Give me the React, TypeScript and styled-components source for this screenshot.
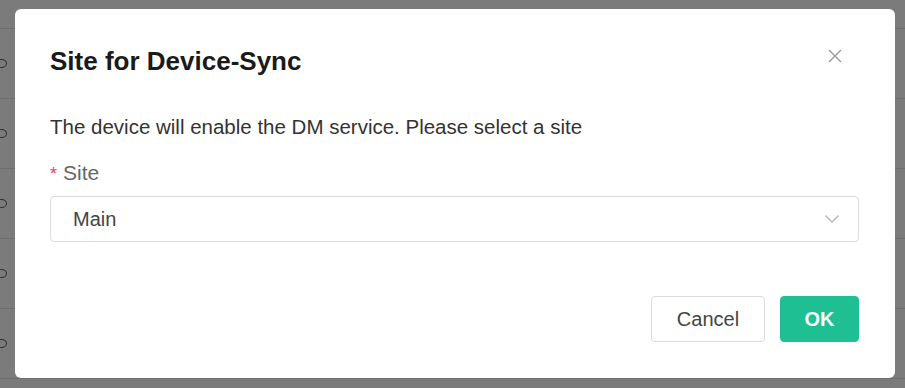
import React from "react";
import styled, { createGlobalStyle } from "styled-components";

const Global = createGlobalStyle`
  html, body { margin: 0; padding: 0; }
  body {
    width: 905px;
    height: 388px;
    overflow: hidden;
    background: #7b7b7b;
    font-family: "Liberation Sans", Arial, sans-serif;
  }
`;

const Page = styled.div`
  position: relative;
  width: 905px;
  height: 388px;
  overflow: hidden;
  background: #7b7b7b;
`;

const Table = styled.div`
  display: flex;
  flex-direction: column;
  padding-top: 28px;
`;

const Row = styled.div`
  height: 70px;
  border-top: 1px solid #6f6f6f;
  display: flex;
  align-items: center;
  box-sizing: border-box;
`;

const RowIcon = styled.span`
  width: 9px;
  height: 7px;
  margin-left: -4px;
  border: 1.5px solid #2e2e2e;
  border-radius: 50%;
`;

const Modal = styled.div`
  position: absolute;
  left: 15px;
  top: 9px;
  width: 880px;
  height: 369px;
  box-sizing: border-box;
  background: #fff;
  border-radius: 6px;
  padding: 38px 36px 0 35px;
  display: flex;
  flex-direction: column;
`;

const Header = styled.div`
  display: flex;
  align-items: center;
  justify-content: space-between;
  height: 28px;
`;

const Title = styled.h2`
  margin: 0;
  font-size: 26px;
  font-weight: 700;
  color: #1a1a1a;
  line-height: 28px;
`;

const Close = styled.button`
  border: 0;
  background: none;
  padding: 0;
  width: 20px;
  height: 20px;
  margin-right: 14px;
  margin-top: -10px;
  display: flex;
  align-items: center;
  justify-content: center;
  cursor: pointer;
`;

const Message = styled.p`
  margin: 40px 0 0;
  font-size: 20.5px;
  line-height: 24px;
  color: #333;
`;

const Label = styled.div`
  margin-top: 22px;
  font-size: 21px;
  line-height: 24px;
  color: #666;
`;

const Star = styled.span`
  color: #e5484d;
  font-size: 18px;
  margin-right: 6px;
`;

const Select = styled.div`
  margin-top: 10px;
  height: 46px;
  box-sizing: border-box;
  border: 1px solid #dcdcdc;
  border-radius: 4px;
  display: flex;
  align-items: center;
  justify-content: space-between;
  padding: 0 18px 0 22px;
  font-size: 20px;
  color: #444;
`;

const Footer = styled.div`
  margin-top: 54px;
  display: flex;
  justify-content: flex-end;
  gap: 15px;
`;

const Button = styled.button<{ $primary?: boolean }>`
  height: 46px;
  box-sizing: border-box;
  border-radius: 4px;
  font-family: "Liberation Sans", Arial, sans-serif;
  font-size: 20px;
  cursor: pointer;
  padding: 0;
  width: ${(p) => (p.$primary ? "79px" : "114px")};
  border: 1px solid ${(p) => (p.$primary ? "#1ebf93" : "#dcdcdc")};
  background: ${(p) => (p.$primary ? "#1ebf93" : "#fff")};
  color: ${(p) => (p.$primary ? "#f4fffb" : "#444")};
  font-weight: ${(p) => (p.$primary ? 700 : 400)};
`;

export default function App() {
  return (
    <Page>
      <Global />
      <Table>
        {[0, 1, 2, 3, 4, 5].map((i) => (
          <Row key={i}>
            <RowIcon />
          </Row>
        ))}
      </Table>
      <Modal>
        <Header>
          <Title>Site for Device-Sync</Title>
          <Close aria-label="close">
            <svg width="16" height="16" viewBox="0 0 16 16">
              <path d="M2 2 L14 14 M14 2 L2 14" stroke="#999" strokeWidth="1.4" />
            </svg>
          </Close>
        </Header>
        <Message>The device will enable the DM service. Please select a site</Message>
        <Label>
          <Star>*</Star>Site
        </Label>
        <Select>
          <span>Main</span>
          <svg width="16" height="10" viewBox="0 0 16 10">
            <path d="M1.5 1.5 L8 8 L14.5 1.5" fill="none" stroke="#b5b5b5" strokeWidth="1.3" />
          </svg>
        </Select>
        <Footer>
          <Button>Cancel</Button>
          <Button $primary>OK</Button>
        </Footer>
      </Modal>
    </Page>
  );
}
